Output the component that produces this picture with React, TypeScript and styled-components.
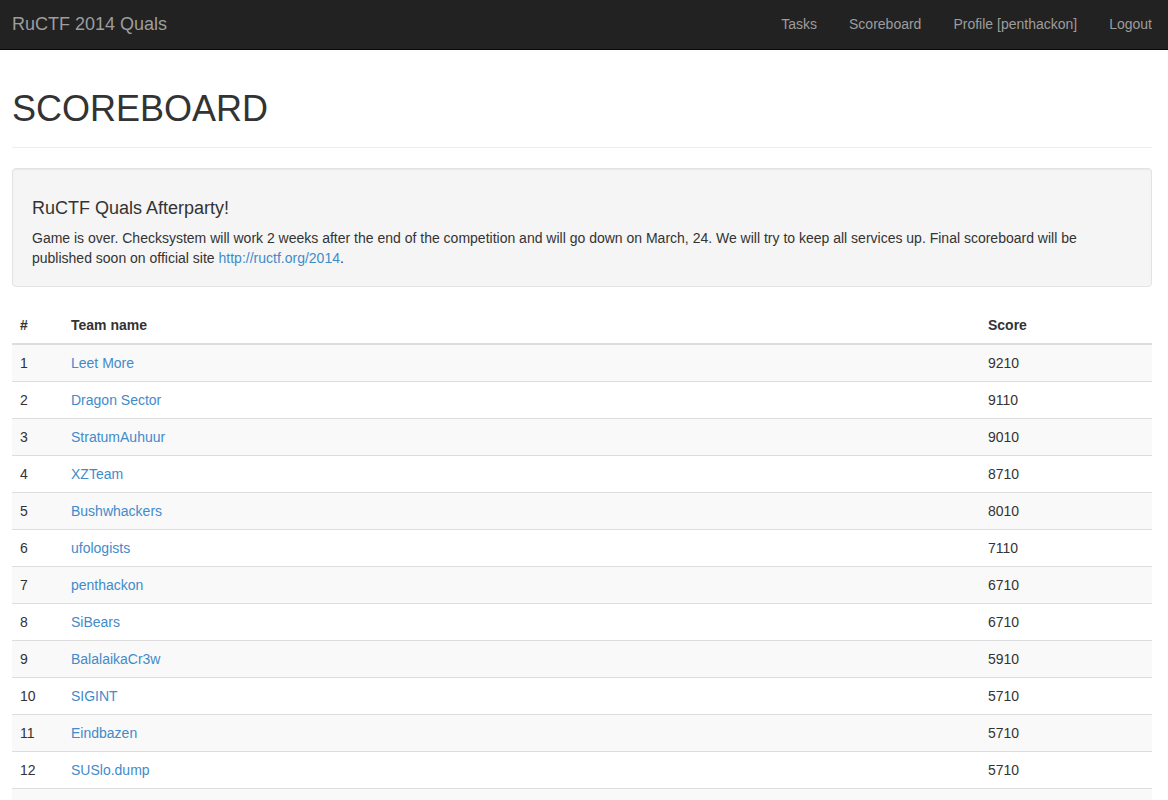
import React from 'react'
import styled, { createGlobalStyle } from 'styled-components'

interface Team {
  place: number,
  name: string,
  score: number
}

const teams: Team[] = [
  { place: 1, name: 'Leet More', score: 9210 },
  { place: 2, name: 'Dragon Sector', score: 9110 },
  { place: 3, name: 'StratumAuhuur', score: 9010 },
  { place: 4, name: 'XZTeam', score: 8710 },
  { place: 5, name: 'Bushwhackers', score: 8010 },
  { place: 6, name: 'ufologists', score: 7110 },
  { place: 7, name: 'penthackon', score: 6710 },
  { place: 8, name: 'SiBears', score: 6710 },
  { place: 9, name: 'BalalaikaCr3w', score: 5910 },
  { place: 10, name: 'SIGINT', score: 5710 },
  { place: 11, name: 'Eindbazen', score: 5710 },
  { place: 12, name: 'SUSlo.dump', score: 5710 }
]

const GlobalStyle = createGlobalStyle`
  html, body {
    margin: 0;
    padding: 0;
    background: #fff;
  }
  body {
    font-family: "Liberation Sans", Arial, Helvetica, sans-serif;
    font-size: 14px;
    line-height: 20px;
    color: #333;
  }
  a {
    color: #428bca;
    text-decoration: none;
  }
`

const Navbar = styled.nav`
  height: 49px;
  background: #222;
  border-bottom: 1px solid #080808;
  display: flex;
  align-items: center;
  justify-content: space-between;
  padding: 0 0 0 12px;
`

const Brand = styled.a`
  color: #9d9d9d;
  font-size: 18px;
  line-height: 20px;
  padding: 14px 0 15px;
`

const NavList = styled.ul`
  display: flex;
  list-style: none;
  margin: 0;
  padding: 0;
`

const NavLink = styled.a`
  display: block;
  color: #9d9d9d;
  line-height: 20px;
  padding: 14px 16px 15px;
`

const Container = styled.main`
  padding: 0 16px 0 12px;
`

const PageHeader = styled.div`
  margin: 39px 0 20px;
  padding-bottom: 8px;
  border-bottom: 1px solid #eee;
`

const Title = styled.h1`
  margin: 0 0 10px;
  font-size: 36px;
  font-weight: 500;
  line-height: 40px;
`

const Well = styled.div`
  background: #f5f5f5;
  border: 1px solid #e3e3e3;
  border-radius: 4px;
  box-shadow: inset 0 1px 1px rgba(0, 0, 0, 0.05);
  padding: 19px 19px 18px;
  margin-bottom: 20px;
`

const WellTitle = styled.h4`
  margin: 10px 0 10px;
  font-size: 18px;
  font-weight: 500;
  line-height: 20px;
`

const WellText = styled.p`
  margin: 0;
`

const Table = styled.table`
  width: 100%;
  border-collapse: collapse;
  border-spacing: 0;
`

const HeadCell = styled.th<{ $w?: number }>`
  text-align: left;
  font-weight: bold;
  padding: 8px;
  line-height: 20px;
  border-bottom: 2px solid #ddd;
  width: ${({ $w }) => ($w ? `${$w}px` : 'auto')};
`

const Row = styled.tr<{ $odd: boolean }>`
  background: ${({ $odd }) => ($odd ? '#f9f9f9' : '#fff')};
`

const Cell = styled.td`
  padding: 8px;
  line-height: 20px;
  border-top: 1px solid #ddd;
`

const App: React.FC = () => {
  return (
    <>
      <GlobalStyle />
      <Navbar>
        <Brand href='#'>RuCTF 2014 Quals</Brand>
        <NavList>
          <li><NavLink href='#'>Tasks</NavLink></li>
          <li><NavLink href='#'>Scoreboard</NavLink></li>
          <li><NavLink href='#'>Profile [penthackon]</NavLink></li>
          <li><NavLink href='#'>Logout</NavLink></li>
        </NavList>
      </Navbar>

      <Container>
        <PageHeader>
          <Title>SCOREBOARD</Title>
        </PageHeader>

        <Well>
          <WellTitle>RuCTF Quals Afterparty!</WellTitle>
          <WellText>
            Game is over. Checksystem will work 2 weeks after the end of the competition and will go down on March, 24. We will try to keep all services up. Final scoreboard will be published soon on official site <a href='#'>http://ructf.org/2014</a>.
          </WellText>
        </Well>

        <Table>
          <thead>
            <tr>
              <HeadCell $w={35}>#</HeadCell>
              <HeadCell>Team name</HeadCell>
              <HeadCell $w={156}>Score</HeadCell>
            </tr>
          </thead>
          <tbody>
            {teams.map((t, i) => (
              <Row key={t.place} $odd={i % 2 === 0}>
                <Cell>{t.place}</Cell>
                <Cell><a href='#'>{t.name}</a></Cell>
                <Cell>{t.score}</Cell>
              </Row>
            ))}
            <Row $odd={true}>
              <Cell>&nbsp;</Cell>
              <Cell>&nbsp;</Cell>
              <Cell>&nbsp;</Cell>
            </Row>
          </tbody>
        </Table>
      </Container>
    </>
  )
}

export default App
